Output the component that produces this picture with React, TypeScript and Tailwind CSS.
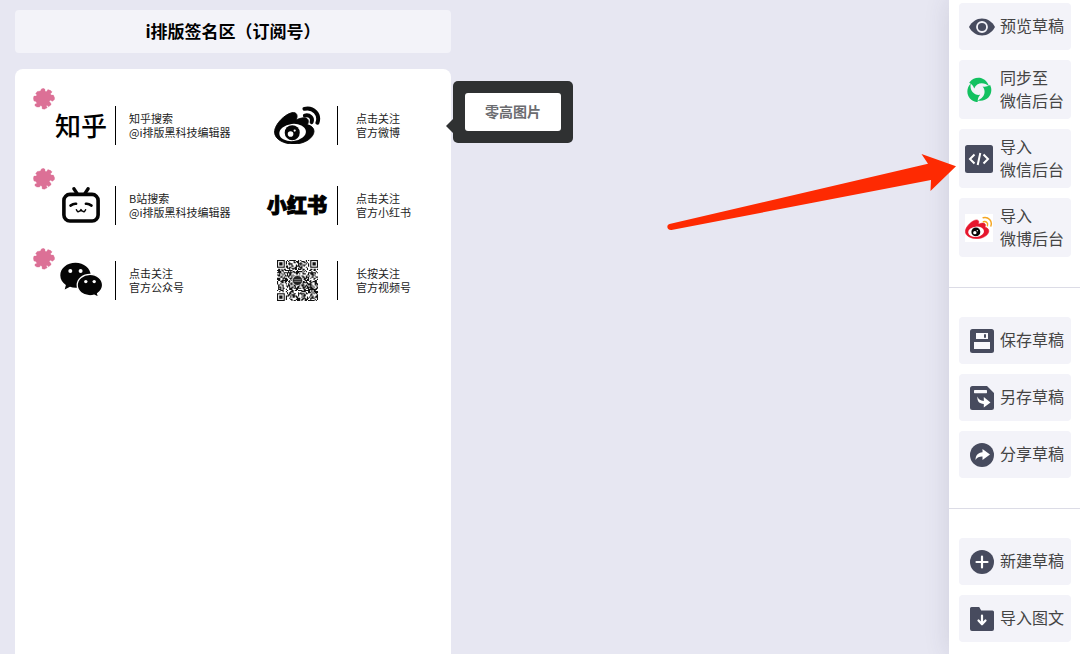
import type { ReactNode } from "react";

const fontStack = "font-['Noto_Sans_CJK_SC','Noto_Sans',sans-serif]";

function PuzzleBadge() {
  return (
    <svg viewBox="97 264 68 68" className="mt-[3px] size-[22px] shrink-0 self-start" aria-hidden="true">
      <path
        d="M110 275L120 273L123 267L129 265L134 268L134 274L139 275L143 269L152 272L156 276L151 282L153 286L160 286L164 295L163 300L157 305L151 302L147 305L152 311L153 316L145 322L141 318L138 319L141 325L132 330L125 328L125 321L121 318L117 323L109 323L103 319L103 314L109 311L106 306L100 304L98 296L100 289L107 289L109 285L105 282Z"
        fill="#dc7096"
        stroke="#dc7096"
        strokeWidth="1"
        strokeLinejoin="round"
      />
    </svg>
  );
}

const weiboBody =
  "M18.059 11.649c-.346-.105-.57-.18-.405-.615.375-.977.42-1.804 0-2.404-.781-1.112-2.915-1.053-5.364-.03 0 0-.766.331-.571-.271.376-1.217.315-2.224-.27-2.809-1.338-1.337-4.869.045-7.888 3.08C1.309 10.87 0 13.273 0 15.348c0 3.981 5.099 6.395 10.086 6.395 6.536 0 10.888-3.801 10.888-6.82 0-1.822-1.547-2.854-2.915-3.284z";

function WeiboLogo({ className, body, pupil, waves, thin }: { className: string; body: string; pupil: string; waves: string; thin?: boolean }) {
  return (
    <svg viewBox="-0.3 1.5 25 20.7" className={className} aria-hidden="true">
      <path d={weiboBody} fill={body} stroke={body} strokeWidth="0.5" />
      <ellipse cx="9.6" cy="15.6" rx="7.1" ry="4.6" fill="#fff" transform="rotate(-6 9.6 15.6)" />
      <circle cx="9.4" cy="15.7" r="4" fill={pupil} />
      <circle cx="8.5" cy="16.4" r="1.5" fill="#fff" />
      <circle cx="10.7" cy="14.6" r="0.6" fill="#fff" />
      <g fill="none" stroke={waves} strokeWidth={thin ? 1.3 : 2.1} strokeLinecap="round">
        <path d="M15.9 3C20.6 1.900 24.400 6 22.800 10.400" />
        <path d="M16.100 6.600C18.800 6 20.500 7.900 19.700 10.100" />
      </g>
    </svg>
  );
}

function BilibiliLogo() {
  return (
    <svg viewBox="0 0 38 36" className="h-9 w-[38px]" fill="none" stroke="#050505" strokeLinecap="round" aria-hidden="true">
      <rect x="1.9" y="7.4" width="34.2" height="26.6" rx="6" strokeWidth="3.6" />
      <path d="M12 1.800l2.800 4.400M26 1.800l-2.800 4.400" strokeWidth="3.400" />
      <path d="M8.500 18.600q3-2.200 5.600-1.800M29.500 18.600q-3-2.200-5.600-1.800" strokeWidth="2.600" />
      <path d="M14.400 22.800q1.200 2.600 2.600 1.600q1.400-.4 2-1.800q.6 1.400 2 1.800q1.400 1 2.600-1.600" strokeWidth="1.500" strokeLinejoin="round" />
    </svg>
  );
}

function WechatLogo() {
  return (
    <svg viewBox="0 0 43 36" className="h-9 w-[43px]" aria-hidden="true">
      <path d="M15.500.8C7 .8.300 6.300.300 13.300c0 4 2.100 7.400 5.600 9.700L4.700 27.400l5.300-2.600c1.700.5 3.500.9 5.500.9 8.400 0 15.200-5.500 15.200-12.400S23.900.8 15.500.8z" fill="#050505" />
      <path d="M30 12.300c-7 0-12.800 4.800-12.800 10.800S23 33.800 30 33.800c1.500 0 2.900-.2 4.200-.6l4.400 2.200-1-3.800c3-2 5-4.900 5-8.500 0-6-5.600-10.800-12.600-10.800z" fill="#050505" stroke="#fff" strokeWidth="1.300" />
      <g fill="#fff">
        <circle cx="10.300" cy="9" r="2" />
        <circle cx="20.600" cy="9" r="2" />
        <circle cx="25.800" cy="19.600" r="1.700" />
        <circle cx="34.200" cy="19.600" r="1.700" />
      </g>
    </svg>
  );
}

const QR_SIZE = 37;

function qrCells(): string {
  let d = "";
  let seed = 20231;
  for (let y = 0; y < QR_SIZE; y++) {
    for (let x = 0; x < QR_SIZE; x++) {
      seed = (seed * 48271) % 2147483647;
      const corner = (x < 8 && y < 8) || (x > QR_SIZE - 9 && y < 8) || (x < 8 && y > QR_SIZE - 9);
      if (!corner && seed / 2147483647 < 0.54) d += `M${x} ${y}h1v1h-1z`;
    }
  }
  return d;
}

const qrPath = qrCells();

function QrCode() {
  const finders = [[0, 0], [QR_SIZE - 7, 0], [0, QR_SIZE - 7]];
  return (
    <svg viewBox="0 0 37 37" className="size-[41px]" role="img" aria-label="QR">
      <path d={qrPath} fill="#111" />
      {finders.map(([x, y]) => (
        <g key={`${x}-${y}`}>
          <rect x={x + 0.5} y={y + 0.5} width="6" height="6" fill="#fff" stroke="#111" />
          <rect x={x + 2} y={y + 2} width="3" height="3" fill="#111" />
        </g>
      ))}
      <circle cx="18.500" cy="18.500" r="4.500" fill="#222" stroke="#fff" strokeWidth="0.600" />
      <path d="M15.500 17.700h6M15.500 19.300h6" stroke="#999" strokeWidth="0.700" />
    </svg>
  );
}

function Contact({ logo, lines, wide }: { logo: ReactNode; lines: string[]; wide?: boolean }) {
  return (
    <a href="#" className="flex items-center">
      <span className={wide ? "flex w-15 justify-center" : "flex w-13 justify-center"}>{logo}</span>
      <span className={wide ? "ml-2.5 h-[39px] w-px bg-black" : "ml-2 h-[39px] w-px bg-black"} />
      <span className={wide ? "ml-[18px] text-[11px] leading-[14px] text-[#222]" : "ml-[13px] text-[11px] leading-[14px] text-[#222]"}>
        {lines.map((line) => (
          <span key={line} className="block whitespace-nowrap">{line}</span>
        ))}
      </span>
    </a>
  );
}

function SignatureRow({ left, right }: { left: ReactNode; right: ReactNode }) {
  return (
    <li className="flex h-20 last:h-[70px]">
      <PuzzleBadge />
      <div className="flex w-[212px]">{left}</div>
      <div className="flex">{right}</div>
    </li>
  );
}

const slate = "#474b5e";

function EyeIcon() {
  return (
    <svg viewBox="0 0 26 18" className="w-[26px] shrink-0" aria-hidden="true">
      <path d="M0 9C3 3.500 7.500.500 13 .500S23 3.500 26 9c-3 5.500-7.500 8.500-13 8.500S3 14.500 0 9z" fill={slate} />
      <circle cx="13" cy="9" r="5" fill={slate} stroke="#f3f3f9" strokeWidth="1.800" />
    </svg>
  );
}

function SyncIcon() {
  const blade = "M4 4.800C8.600-1.200 19.800-1 23 9.400C18.200 4.600 10.600 5.200 8.200 11.600C7.400 9.200 6 7.400 3.200 5.800z";
  return (
    <svg viewBox="0 0 26 26" className="size-[26px]" fill="#12c160" aria-hidden="true">
      <path d={blade} />
      <path d={blade} transform="rotate(120 13 13)" />
      <path d={blade} transform="rotate(240 13 13)" />
    </svg>
  );
}

function CodeIcon() {
  return (
    <svg viewBox="0 0 28 28" className="size-7" fill="none" aria-hidden="true">
      <rect width="28" height="28" rx="2.500" fill={slate} />
      <path d="M9.500 9.500L5 14l4.500 4.500M18.500 9.500L23 14l-4.500 4.500M15.300 8l-2.600 12" stroke="#fff" strokeWidth="2" />
    </svg>
  );
}

function SaveIcon() {
  return (
    <svg viewBox="0 0 24 24" className="size-6" aria-hidden="true">
      <rect width="24" height="24" rx="2.500" fill={slate} />
      <path d="M6 4h12v6H6zM4 13h16v7H4z" fill="#f8f8fc" />
      <path d="M14 5.200h2v3.600h-2z" fill={slate} />
    </svg>
  );
}

function SaveAsIcon() {
  return (
    <svg viewBox="0 0 24 24" className="size-6" aria-hidden="true">
      <path d="M2.500 0H17l7 7v14.500a2.500 2.500 0 0 1-2.500 2.500h-19A2.500 2.500 0 0 1 0 21.500v-19A2.500 2.500 0 0 1 2.500 0z" fill={slate} />
      <rect x="4" y="4" width="13" height="3.200" rx=".6" fill="#f8f8fc" />
      <path d="M7.500 10.500c1 3.200 3 4.300 6.300 4.400V11l6.700 5.600-6.700 4.900v-3.600c-4.600-.2-7-2.700-6.300-7.400z" fill="#fff" />
    </svg>
  );
}

function ShareIcon() {
  return (
    <svg viewBox="0 0 24 24" className="size-6" aria-hidden="true">
      <circle cx="12" cy="12" r="12" fill={slate} />
      <path d="M12.500 6l7.500 5.500-7.500 5.500v-3.400c-3.200-.1-5.200.8-7 3.400.2-4.600 2.400-7.300 7-7.700z" fill="#fff" />
    </svg>
  );
}

function PlusIcon() {
  return (
    <svg viewBox="0 0 24 24" className="size-6" aria-hidden="true">
      <circle cx="12" cy="12" r="12" fill={slate} />
      <path d="M12 6.500v11M6.500 12h11" stroke="#fff" strokeWidth="2.200" strokeLinecap="round" />
    </svg>
  );
}

function FolderDownIcon() {
  return (
    <svg viewBox="0 0 24 24" className="size-6" aria-hidden="true">
      <path d="M1.500 0h7.700l2 3.500h11.300A1.500 1.500 0 0 1 24 5v17a2 2 0 0 1-2 2H2a2 2 0 0 1-2-2V1.500A1.500 1.500 0 0 1 1.500 0z" fill={slate} />
      <path d="M12 8.500v7M8.500 13.500l3.500 3.800 3.500-3.800" fill="none" stroke="#fff" strokeWidth="2.200" strokeLinecap="round" strokeLinejoin="round" />
    </svg>
  );
}

function SideButton({ icon, lines }: { icon: ReactNode; lines: string[] }) {
  const tall = lines.length > 1;
  return (
    <button
      type="button"
      className={
        tall
          ? "flex h-[59px] items-center gap-[7px] rounded bg-[#f3f3f9] pl-1.5 text-left text-base leading-[23px] text-[#444]"
          : "flex h-[47px] items-center gap-1.5 rounded bg-[#f3f3f9] pl-[11px] text-left text-base leading-[23px] text-[#444]"
      }
    >
      <span className={tall ? "flex w-7 shrink-0 justify-center" : "flex w-6 shrink-0 justify-center"}>{icon}</span>
      <span className="pb-0.5 whitespace-nowrap">
        {lines.map((line) => (
          <span key={line} className="block">{line}</span>
        ))}
      </span>
    </button>
  );
}

function Pointer() {
  return (
    <svg viewBox="0 0 290 80" className="pointer-events-none absolute top-[152px] right-[124px] h-20 w-[290px]" aria-hidden="true">
      <path d="M3.500 72L262 11.700 255.500 2 290 14.200 264.500 39 265 28 5.500 78C.8 78.400 0 73 3.500 72z" fill="#fe2a02" />
    </svg>
  );
}

export default function App() {
  return (
    <div className={`relative flex h-screen overflow-hidden bg-[#e7e7f2] ${fontStack}`}>
      <main className="flex flex-1 pt-2.5 pl-[15px]">
        <div className="flex w-[436px] flex-col gap-4">
          <h1 className="flex h-[43px] items-center justify-center rounded bg-[#f3f3f9] pb-0.5 text-[17px] font-bold text-black">
            i排版签名区（订阅号）
          </h1>
          <section className="relative flex-1 rounded-t-lg bg-white pt-4 pl-[18px]">
            <ul>
              <SignatureRow
                left={<Contact logo={<span className="text-[26px] leading-none font-medium text-black">知乎</span>} lines={["知乎搜索", "@i排版黑科技编辑器"]} />}
                right={<Contact wide logo={<WeiboLogo className="w-[47px]" body="#050505" pupil="#050505" waves="#050505" />} lines={["点击关注", "官方微博"]} />}
              />
              <SignatureRow
                left={<Contact logo={<BilibiliLogo />} lines={["B站搜索", "@i排版黑科技编辑器"]} />}
                right={<Contact wide logo={<span className="text-[20px] leading-none font-black whitespace-nowrap text-black [-webkit-text-stroke:1px_black]">小红书</span>} lines={["点击关注", "官方小红书"]} />}
              />
              <SignatureRow
                left={<Contact logo={<WechatLogo />} lines={["点击关注", "官方公众号"]} />}
                right={<Contact wide logo={<QrCode />} lines={["长按关注", "官方视频号"]} />}
              />
            </ul>
            <div className="absolute top-3 left-full ml-0.5 rounded-[5px] bg-[#2f3132] p-3">
              <svg viewBox="0 0 7 14" className="absolute top-[38px] right-full h-3.5 w-[7px]" aria-hidden="true">
                <path d="M7 0v14L0 7z" fill="#2f3132" />
              </svg>
              <button type="button" className="block h-[38px] w-24 rounded-[3px] bg-white pb-0.5 text-sm font-bold text-[#6b6c70]">零高图片</button>
            </div>
          </section>
        </div>
      </main>

      <aside className="w-[131px] shrink-0 bg-white shadow-[0_0_24px_rgba(60,60,90,0.14)]">
        <nav>
          <div className="flex flex-col gap-2.5 border-b border-[#dcdce6] pt-[3px] pr-[9px] pb-[30px] pl-2.5">
            <SideButton icon={<EyeIcon />} lines={["预览草稿"]} />
            <SideButton icon={<SyncIcon />} lines={["同步至", "微信后台"]} />
            <SideButton icon={<CodeIcon />} lines={["导入", "微信后台"]} />
            <SideButton
              icon={
                <span className="flex size-7 items-center bg-white">
                  <WeiboLogo className="w-7" body="#e6162d" pupil="#050505" waves="#f5a623" thin />
                </span>
              }
              lines={["导入", "微博后台"]}
            />
          </div>
          <div className="flex flex-col gap-2.5 border-b border-[#dcdce6] pt-[29px] pr-[9px] pb-[30px] pl-2.5">
            <SideButton icon={<SaveIcon />} lines={["保存草稿"]} />
            <SideButton icon={<SaveAsIcon />} lines={["另存草稿"]} />
            <SideButton icon={<ShareIcon />} lines={["分享草稿"]} />
          </div>
          <div className="flex flex-col gap-2.5 pt-[29px] pr-[9px] pb-[11px] pl-2.5">
            <SideButton icon={<PlusIcon />} lines={["新建草稿"]} />
            <SideButton icon={<FolderDownIcon />} lines={["导入图文"]} />
          </div>
        </nav>
      </aside>

      <Pointer />
    </div>
  );
}
